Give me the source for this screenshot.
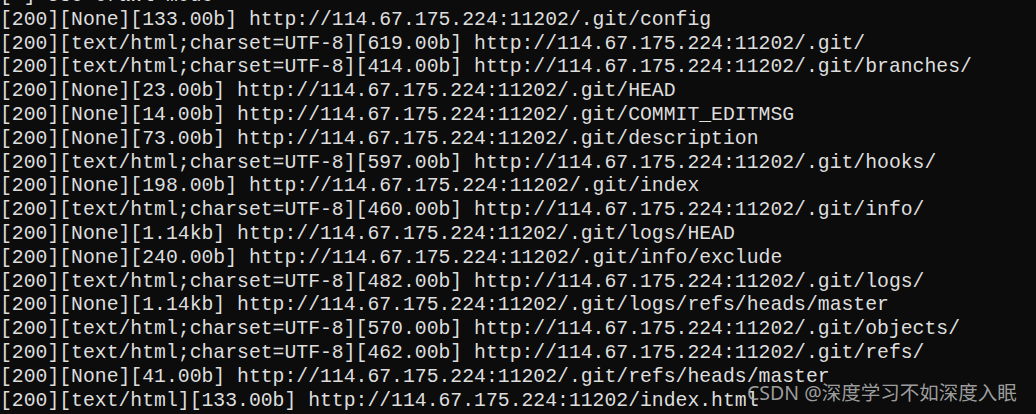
const host = "http://114.67.175.224:11202";

const lines: string[] = [
  "[+] Use crawl mode",
  `[200][None][133.00b] ${host}/.git/config`,
  `[200][text/html;charset=UTF-8][619.00b] ${host}/.git/`,
  `[200][text/html;charset=UTF-8][414.00b] ${host}/.git/branches/`,
  `[200][None][23.00b] ${host}/.git/HEAD`,
  `[200][None][14.00b] ${host}/.git/COMMIT_EDITMSG`,
  `[200][None][73.00b] ${host}/.git/description`,
  `[200][text/html;charset=UTF-8][597.00b] ${host}/.git/hooks/`,
  `[200][None][198.00b] ${host}/.git/index`,
  `[200][text/html;charset=UTF-8][460.00b] ${host}/.git/info/`,
  `[200][None][1.14kb] ${host}/.git/logs/HEAD`,
  `[200][None][240.00b] ${host}/.git/info/exclude`,
  `[200][text/html;charset=UTF-8][482.00b] ${host}/.git/logs/`,
  `[200][None][1.14kb] ${host}/.git/logs/refs/heads/master`,
  `[200][text/html;charset=UTF-8][570.00b] ${host}/.git/objects/`,
  `[200][text/html;charset=UTF-8][462.00b] ${host}/.git/refs/`,
  `[200][None][41.00b] ${host}/.git/refs/heads/master`,
  `[200][text/html][133.00b] ${host}/index.html`,
];

export default function App() {
  return (
    <main className="relative h-[414px] w-[1036px] overflow-hidden bg-[#0c0c0c]">
      <div className="-mt-[15px] whitespace-pre font-['Liberation_Mono',monospace] text-[19.75px] leading-[23.8px] text-[#dedede]">
        {lines.map((line, i) => (
          <div key={i}>{line}</div>
        ))}
      </div>
      {/* csdn watermark */}
      <div className="absolute left-[747px] top-[380px] whitespace-nowrap font-['Noto_Sans','Noto_Sans_CJK_SC',sans-serif] text-[19.5px] leading-[26px] text-[#b0b0b0]/90">
        CSDN @深度学习不如深度入眠
      </div>
    </main>
  );
}
